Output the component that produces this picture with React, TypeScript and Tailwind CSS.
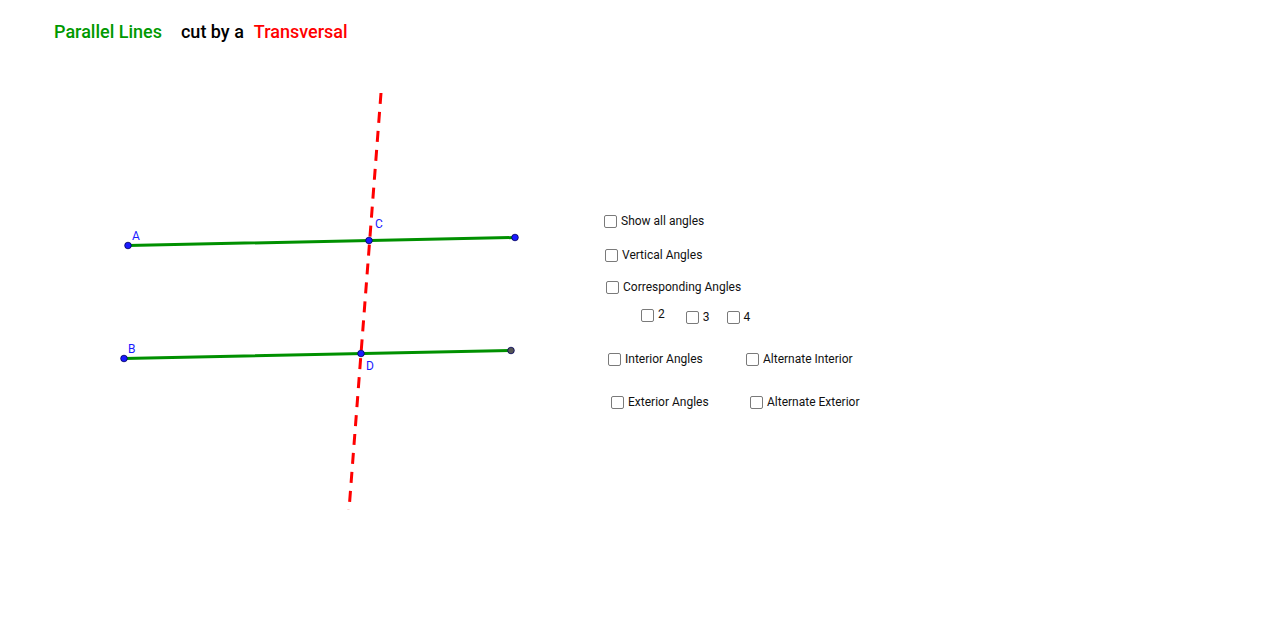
import React from "react";

const font = { fontFamily: "Roboto, 'Liberation Sans', sans-serif" };

const Box = ({ className = "" }: { className?: string }) => (
  <span className={`inline-block w-[13px] h-[13px] border border-[#7a7a7a] rounded-[2px] bg-white shrink-0 ${className}`} />
);

const Check = ({ label, className = "" }: { label: string; className?: string }) => (
  <label className={`flex items-center gap-[4px] text-[12px] leading-[13px] text-[#111] ${className}`}>
    <Box />
    <span>{label}</span>
  </label>
);

const Point = ({ x, y, fill = "#1a1aff" }: { x: number; y: number; fill?: string }) => (
  <circle cx={x} cy={y} r={3.3} fill={fill} stroke="#00005a" strokeWidth={0.8} />
);

const Geometry = () => (
  <svg width={600} height={589} viewBox="0 43 600 589" className="shrink-0">
    <line x1={128} y1={245.5} x2={515} y2={237.5} stroke="#009000" strokeWidth={3} strokeLinecap="round" />
    <line x1={124} y1={358.5} x2={511} y2={350.5} stroke="#009000" strokeWidth={3} strokeLinecap="round" />
    <line x1={381} y1={93} x2={349} y2={510} stroke="#ff0000" strokeWidth={3} strokeDasharray="11 8" />
    <Point x={128} y={245.5} />
    <Point x={369} y={240.5} />
    <Point x={515} y={237.5} />
    <Point x={124} y={358.5} />
    <Point x={361} y={353.5} />
    <Point x={511} y={350.5} fill="#555" />
    <g fill="#1a1aff" fontSize={12} style={font}>
      <text x={132} y={240}>A</text>
      <text x={375} y={228}>C</text>
      <text x={128} y={353}>B</text>
      <text x={366} y={370}>D</text>
    </g>
  </svg>
);

export default function App() {
  return (
    <div className="w-[1280px] h-[632px] bg-white overflow-hidden" style={font}>
      <div className="flex items-baseline h-[43px] pt-[20px] pl-[54px] text-[18px] leading-[24px] font-medium">
        <span className="text-[#009900]">Parallel Lines</span>
        <span className="ml-[19px] text-black">cut by a</span>
        <span className="ml-[10px] text-[#ff0000]">Transversal</span>
      </div>
      <div className="flex">
        <Geometry />
        <div className="flex flex-col pt-[172px] pl-[4px]">
          <Check label="Show all angles" />
          <Check label="Vertical Angles" className="mt-[21px] ml-[1px]" />
          <Check label="Corresponding Angles" className="mt-[19px] ml-[2px]" />
          <div className="flex items-start h-[15px] mt-[15px] ml-[37px] text-[12px] leading-[13px] text-[#111]">
            <label className="flex items-start gap-[4px]">
              <Box />
              <span className="-mt-[1px]">2</span>
            </label>
            <label className="flex items-center gap-[4px] ml-[21px] mt-[2px]">
              <Box />
              <span>3</span>
            </label>
            <label className="flex items-center gap-[4px] ml-[17px] mt-[2px]">
              <Box />
              <span>4</span>
            </label>
          </div>
          <div className="flex mt-[29px] ml-[4px]">
            <Check label="Interior Angles" className="w-[138px]" />
            <Check label="Alternate Interior" />
          </div>
          <div className="flex mt-[30px] ml-[7px]">
            <Check label="Exterior Angles" className="w-[139px]" />
            <Check label="Alternate Exterior" />
          </div>
        </div>
      </div>
    </div>
  );
}
